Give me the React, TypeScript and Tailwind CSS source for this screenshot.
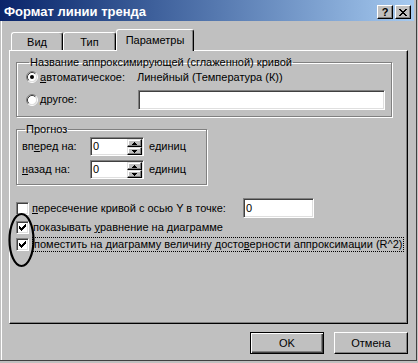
import React from 'react';

// classic win2000 bevels
const raised =
  'border border-t-white border-l-white border-r-black border-b-black shadow-[inset_-1px_-1px_0_#808080]';
const sunken =
  'border border-t-[#808080] border-l-[#808080] border-r-white border-b-white shadow-[inset_1px_1px_0_#404040,inset_-1px_-1px_0_#dfdfdf]';
const etched = 'border border-[#808080] shadow-[inset_1px_1px_0_white,1px_1px_0_white]';

const CHECK = ['......#', '.....##', '#...###', '##.###.', '#####..', '.###...', '..#....'];
const CROSS = ['##....##', '.##..##.', '..####..', '...##...', '..####..', '.##..##.', '##....##'];

function PixelIcon({ rows, className = '' }: { rows: string[]; className?: string }) {
  const w = rows[0].length;
  const h = rows.length;
  const d = rows
    .flatMap((row, y) => row.split('').map((c, x) => (c === '#' ? `M${x} ${y}h1v1h-1z` : '')))
    .join('');
  return (
    <svg width={w} height={h} viewBox={`0 0 ${w} ${h}`} className={className} shapeRendering="crispEdges">
      <path d={d} fill="black" />
    </svg>
  );
}

function U({ children }: { children: React.ReactNode }) {
  return <span className="underline underline-offset-[1px]">{children}</span>;
}

function Radio({ checked }: { checked?: boolean }) {
  return (
    <svg width="12" height="12" viewBox="0 0 12 12" className="shrink-0">
      <circle cx="6" cy="6" r="4.5" fill="white" />
      <path d="M2.11 9.89 A5.5 5.5 0 0 1 9.89 2.11" fill="none" stroke="#808080" />
      <path d="M9.89 2.11 A5.5 5.5 0 0 1 2.11 9.89" fill="none" stroke="white" />
      <path d="M2.82 9.18 A4.5 4.5 0 0 1 9.18 2.82" fill="none" stroke="#404040" />
      <path d="M9.18 2.82 A4.5 4.5 0 0 1 2.82 9.18" fill="none" stroke="#dfdfdf" />
      {checked && <circle cx="6" cy="6" r="2" fill="black" />}
    </svg>
  );
}

function Checkbox({ checked }: { checked?: boolean }) {
  return (
    <div className={`w-[13px] h-[13px] shrink-0 bg-white ${sunken} flex items-center justify-center`}>
      {checked && <PixelIcon rows={CHECK} />}
    </div>
  );
}

function Spinner() {
  const btn =
    'h-[8px] bg-[#c0c0c0] border border-t-[#dfdfdf] border-l-[#dfdfdf] border-r-black border-b-black shadow-[inset_-1px_-1px_0_#808080,inset_1px_1px_0_white] flex items-center justify-center';
  return (
    <div className={`w-[54px] h-[19px] bg-white ${sunken} flex pl-[2px] pr-[1px]`}>
      <span className="flex-1 self-center">0</span>
      <div className="w-[15px] mt-[1px] flex flex-col">
        <div className={btn}>
          <svg width="5" height="3" viewBox="0 0 5 3" shapeRendering="crispEdges">
            <path d="M2 0h1v1h1v1h1v1H0V2h1V1h1z" fill="black" />
          </svg>
        </div>
        <div className={btn}>
          <svg width="5" height="3" viewBox="0 0 5 3" shapeRendering="crispEdges">
            <path d="M0 0h5v1H4v1H3v1H2V2H1V1H0z" fill="black" />
          </svg>
        </div>
      </div>
    </div>
  );
}

function Tab({ label, active, className = '' }: { label: string; active?: boolean; className?: string }) {
  return (
    <div
      className={`${
        active ? 'h-[22px] -mb-[1px] pt-[4px]' : 'h-[18px] pt-[3px]'
      } bg-[#c0c0c0] border-t border-l border-r border-t-white border-l-white border-r-black rounded-t-[3px] shadow-[inset_-1px_0_0_#808080] flex justify-center ${className}`}
    >
      {label}
    </div>
  );
}

function CaptionButton({ children, className = '' }: { children: React.ReactNode; className?: string }) {
  return (
    <div className={`w-[16px] h-[14px] bg-[#c0c0c0] ${raised} flex items-center justify-center ${className}`}>
      {children}
    </div>
  );
}

function PushButton({ label, isDefault }: { label: string; isDefault?: boolean }) {
  return (
    <div
      className={`w-[74px] h-[22px] bg-[#c0c0c0] flex items-center justify-center ${
        isDefault
          ? 'border border-black shadow-[inset_1px_1px_0_white,inset_-1px_-1px_0_#404040,inset_-2px_-2px_0_#808080]'
          : raised
      }`}
    >
      {label}
    </div>
  );
}

export default function App() {
  return (
    <div className="relative w-[418px] h-[363px] bg-[#c0c0c0] overflow-hidden font-['Liberation_Sans',Arial,sans-serif] text-[11px] leading-[13px] text-black">
      <div className="w-[417px] h-[361px] flex flex-col border-r border-b border-r-[#404040] border-b-[#404040]">
        {/* Title bar */}
        <div className="h-[21px] w-[414px] bg-linear-to-r from-[#0a246a] to-[#a6caf0] flex items-start pl-[4px] pr-[3px]">
          <span className="flex-1 mt-[4px] text-white font-bold text-[13px] leading-[15px]">Формат линии тренда</span>
          <CaptionButton className="mt-[5px]">
            <span className="font-bold text-[11px] leading-[11px]">?</span>
          </CaptionButton>
          <CaptionButton className="mt-[5px] ml-[2px]">
            <PixelIcon rows={CROSS} />
          </CaptionButton>
        </div>

        <div className="flex-1 ml-[1px] border-l border-white flex flex-col">
          {/* Tabs */}
          <div className="relative z-10 h-[21px] mt-[8px] ml-[7px] flex items-end">
            <Tab label="Вид" className="w-[52px] ml-[2px]" />
            <Tab label="Тип" className="w-[53px]" />
            <Tab label="Параметры" active className="w-[78px]" />
          </div>

          {/* Page */}
          <div
            className={`ml-[7px] w-[399px] h-[274px] border border-t-white border-l-white border-r-black border-b-black shadow-[inset_-1px_-1px_0_#808080] pl-[6px] flex flex-col`}
          >
            <fieldset className={`w-[376px] mt-[5px] ${etched} pl-[9px] pr-[5px] pb-[6px]`}>
              <legend className="ml-[3px] px-[1px] leading-[13px]">
                Название аппроксимирующей (сглаженной) кривой
              </legend>
              <div className="h-[16px] flex items-center">
                <Radio checked />
                <span className="ml-[2px] w-[97px]">
                  <U>а</U>втоматическое:
                </span>
                <span>Линейный (Температура (К))</span>
              </div>
              <div className="h-[21px] mt-[4px] flex items-center">
                <Radio />
                <span className="ml-[2px] w-[98px]">
                  <U>д</U>ругое:
                </span>
                <div className={`w-[247px] h-[20px] bg-white ${sunken}`} />
              </div>
            </fieldset>

            <fieldset className={`w-[191px] mt-[6px] ${etched} pl-[5px] pb-[5px]`}>
              <legend className="ml-[3px] px-[1px] leading-[13px]">Прогноз</legend>
              <div className="h-[19px] mt-[1px] flex items-center">
                <span className="w-[68px]">
                  вп<U>е</U>ред на:
                </span>
                <Spinner />
                <span className="ml-[5px]">единиц</span>
              </div>
              <div className="h-[19px] mt-[4px] flex items-center">
                <span className="w-[68px]">
                  <U>н</U>азад на:
                </span>
                <Spinner />
                <span className="ml-[5px]">единиц</span>
              </div>
            </fieldset>

            <div className="h-[20px] mt-[13px] flex items-center">
              <Checkbox />
              <span className="ml-[3px] w-[211px]">
                <U>п</U>ересечение кривой с осью Y в точке:
              </span>
              <div className={`w-[71px] h-[20px] bg-white ${sunken} pl-[2px] flex items-center`}>0</div>
            </div>
            <div className="h-[16px] mt-[1px] flex items-center">
              <Checkbox checked />
              <span className="ml-[3px] px-[1px]">
                показывать <U>у</U>равнение на диаграмме
              </span>
            </div>
            <div className="h-[16px] mt-[1px] flex items-center">
              <Checkbox checked />
              <span className="ml-[3px] h-[15px] px-[1px] border border-dotted border-black flex items-center">
                <span>
                  поместить на диаграмму величину досто<U>в</U>ерности аппроксимации (R^2)
                </span>
              </span>
            </div>
          </div>

          {/* Buttons */}
          <div className="ml-[7px] w-[399px] mt-[8px] flex justify-end gap-[10px]">
            <PushButton label="OK" isDefault />
            <PushButton label="Отмена" />
          </div>
        </div>
      </div>

      {/* hand-drawn marker around the checked boxes */}
      <svg className="absolute left-[8px] top-[212px] pointer-events-none" width="28" height="56" viewBox="0 0 28 56">
        <ellipse cx="13.5" cy="28" rx="12" ry="26" fill="none" stroke="black" strokeWidth="2.2" />
      </svg>
    </div>
  );
}
